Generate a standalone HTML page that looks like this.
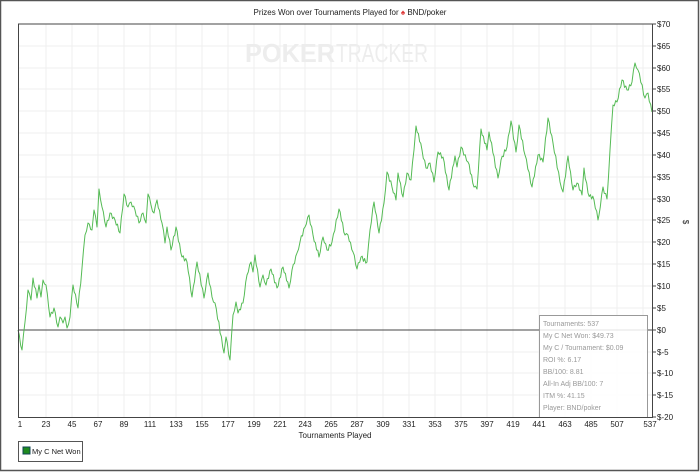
<!DOCTYPE html>
<html><head><meta charset="utf-8"><style>
html,body{margin:0;padding:0;background:#fff;}
svg{display:block;font-family:"Liberation Sans",Arial,sans-serif;}
</style></head><body>
<svg width="700" height="472" viewBox="0 0 700 472" xmlns="http://www.w3.org/2000/svg">
<rect x="0.5" y="0.5" width="698" height="470" fill="#fff" stroke="#555" stroke-width="1.5"/>
<text x="350" y="15" font-size="8" text-anchor="middle" fill="#222">Prizes Won over Tournaments Played for <tspan fill="#d33">♠</tspan> BND/poker</text>
<g stroke="#efefef" stroke-width="1">
<line x1="46" y1="24" x2="46" y2="417"/><line x1="72" y1="24" x2="72" y2="417"/><line x1="98" y1="24" x2="98" y2="417"/><line x1="124" y1="24" x2="124" y2="417"/><line x1="150" y1="24" x2="150" y2="417"/><line x1="176" y1="24" x2="176" y2="417"/><line x1="202" y1="24" x2="202" y2="417"/><line x1="228" y1="24" x2="228" y2="417"/><line x1="254" y1="24" x2="254" y2="417"/><line x1="280" y1="24" x2="280" y2="417"/><line x1="305" y1="24" x2="305" y2="417"/><line x1="331" y1="24" x2="331" y2="417"/><line x1="357" y1="24" x2="357" y2="417"/><line x1="383" y1="24" x2="383" y2="417"/><line x1="409" y1="24" x2="409" y2="417"/><line x1="435" y1="24" x2="435" y2="417"/><line x1="461" y1="24" x2="461" y2="417"/><line x1="487" y1="24" x2="487" y2="417"/><line x1="513" y1="24" x2="513" y2="417"/><line x1="539" y1="24" x2="539" y2="417"/><line x1="565" y1="24" x2="565" y2="417"/><line x1="591" y1="24" x2="591" y2="417"/><line x1="617" y1="24" x2="617" y2="417"/><line x1="643" y1="24" x2="643" y2="417"/>
<line x1="18" y1="46" x2="652" y2="46"/><line x1="18" y1="68" x2="652" y2="68"/><line x1="18" y1="89" x2="652" y2="89"/><line x1="18" y1="111" x2="652" y2="111"/><line x1="18" y1="133" x2="652" y2="133"/><line x1="18" y1="155" x2="652" y2="155"/><line x1="18" y1="177" x2="652" y2="177"/><line x1="18" y1="199" x2="652" y2="199"/><line x1="18" y1="220" x2="652" y2="220"/><line x1="18" y1="242" x2="652" y2="242"/><line x1="18" y1="264" x2="652" y2="264"/><line x1="18" y1="286" x2="652" y2="286"/><line x1="18" y1="308" x2="652" y2="308"/><line x1="18" y1="352" x2="652" y2="352"/><line x1="18" y1="373" x2="652" y2="373"/><line x1="18" y1="395" x2="652" y2="395"/>
</g>
<text x="245" y="62" font-size="26" font-weight="bold" fill="#ededed" textLength="90" lengthAdjust="spacingAndGlyphs">POKER</text>
<text x="336" y="62" font-size="26" fill="#ededed" textLength="92" lengthAdjust="spacingAndGlyphs">TRACKER</text>
<line x1="18" y1="330" x2="652" y2="330" stroke="#444" stroke-width="1"/>
<polyline id="ln" fill="none" stroke="#55bb55" stroke-width="1" stroke-linejoin="round" points="18,330 22,350 25,322 28,290 31,300 33,278 37,298 39,285 41,297 43,280 46,285 50,317 54,308 58,327 60,317 63,323 65,317 67,328 70,317 73,285 78,308 82,268 85,235 88,223 92,230 94,210 97,227 99,189 102,207 106,227 110,213 115,220 120,233 124,194 128,207 131,202 135,210 139,223 143,213 146,223 148,194 151,205 154,213 157,200 162,223 165,243 167,227 171,250 176,227 182,257 187,262 192,297 197,262 204,298 208,273 212,297 215,303 224,353 226,337 230,360 233,315 236,302 238,313 243,303 247,275 251,262 253,272 255,255 260,287 263,275 266,285 271,269 277,288 283,267 289,288 292,270 297,253 300,242 305,227 309,215 313,235 319,257 323,237 327,250 332,242 339,209 345,235 348,235 353,252 357,269 361,257 367,262 370,230 374,202 379,233 384,203 387,172 392,187 396,200 398,173 403,197 407,173 411,180 414,150 416,126 422,150 426,168 430,163 434,182 438,152 443,157 449,190 455,156 457,167 461,147 468,162 474,187 477,189 481,129 487,150 489,132 498,178 501,160 507,147 511,121 516,152 519,125 525,155 532,187 538,155 543,162 548,118 553,143 560,182 563,192 568,156 573,190 577,183 582,195 584,168 588,193 594,200 598,220 599,215 603,187 607,199 610,150 613,105 617,102 622,80 627,90 632,82 635,63 638,70 645,98 648,93 652,112"/>
<rect x="539.5" y="315.5" width="108" height="102" fill="#fff" fill-opacity="0.85" stroke="#999"/>
<g font-size="7" fill="#999">
<text x="543" y="326">Tournaments: 537</text>
<text x="543" y="338">My C Net Won: $49.73</text>
<text x="543" y="350">My C / Tournament: $0.09</text>
<text x="543" y="362">ROI %: 6.17</text>
<text x="543" y="374">BB/100: 8.81</text>
<text x="543" y="386">All-In Adj BB/100: 7</text>
<text x="543" y="398">ITM %: 41.15</text>
<text x="543" y="410">Player: BND/poker</text>
</g>
<polyline fill="none" stroke="#444" stroke-width="1" points="18.5,24 18.5,417.5 652.5,417.5 652.5,24 18,24"/>
<g stroke="#444"><line x1="652" y1="24" x2="656" y2="24"/><line x1="652" y1="46" x2="656" y2="46"/><line x1="652" y1="68" x2="656" y2="68"/><line x1="652" y1="89" x2="656" y2="89"/><line x1="652" y1="111" x2="656" y2="111"/><line x1="652" y1="133" x2="656" y2="133"/><line x1="652" y1="155" x2="656" y2="155"/><line x1="652" y1="177" x2="656" y2="177"/><line x1="652" y1="199" x2="656" y2="199"/><line x1="652" y1="220" x2="656" y2="220"/><line x1="652" y1="242" x2="656" y2="242"/><line x1="652" y1="264" x2="656" y2="264"/><line x1="652" y1="286" x2="656" y2="286"/><line x1="652" y1="308" x2="656" y2="308"/><line x1="652" y1="330" x2="656" y2="330"/><line x1="652" y1="352" x2="656" y2="352"/><line x1="652" y1="373" x2="656" y2="373"/><line x1="652" y1="395" x2="656" y2="395"/><line x1="652" y1="417" x2="656" y2="417"/></g>
<g font-size="8" fill="#222">
<text x="657" y="27">$70</text><text x="657" y="49">$65</text><text x="657" y="71">$60</text><text x="657" y="92">$55</text><text x="657" y="114">$50</text><text x="657" y="136">$45</text><text x="657" y="158">$40</text><text x="657" y="180">$35</text><text x="657" y="202">$30</text><text x="657" y="223">$25</text><text x="657" y="245">$20</text><text x="657" y="267">$15</text><text x="657" y="289">$10</text><text x="657" y="311">$5</text><text x="657" y="333">$0</text><text x="657" y="355">$-5</text><text x="657" y="376">$-10</text><text x="657" y="398">$-15</text><text x="657" y="420">$-20</text>
<text x="683" y="222" transform="rotate(90 683 222)" text-anchor="middle">$</text>
</g>
<g font-size="8" fill="#222" text-anchor="middle">
<text x="20" y="427">1</text><text x="46" y="427">23</text><text x="72" y="427">45</text><text x="98" y="427">67</text><text x="124" y="427">89</text><text x="150" y="427">111</text><text x="176" y="427">133</text><text x="202" y="427">155</text><text x="228" y="427">177</text><text x="254" y="427">199</text><text x="280" y="427">221</text><text x="305" y="427">243</text><text x="331" y="427">265</text><text x="357" y="427">287</text><text x="383" y="427">309</text><text x="409" y="427">331</text><text x="435" y="427">353</text><text x="461" y="427">375</text><text x="487" y="427">397</text><text x="513" y="427">419</text><text x="539" y="427">441</text><text x="565" y="427">463</text><text x="591" y="427">485</text><text x="617" y="427">507</text><text x="650" y="427">537</text>
<text x="335" y="438">Tournaments Played</text>
</g>
<rect x="18.5" y="441.5" width="64" height="20" fill="#fff" stroke="#555"/>
<rect x="23" y="447" width="7" height="7" fill="#1f8a1f" stroke="#145"/>
<text x="32" y="454" font-size="7.5" fill="#222">My C Net Won</text>
</svg>
<script>
(function(){
var el=document.getElementById('ln');
var p=el.getAttribute('points').trim().split(/\s+/).map(function(s){return s.split(',').map(Number);});
var out=[],k=0;
for(var i=0;i<p.length-1;i++){
 var a=p[i],b=p[i+1];out.push(a);
 var dx=b[0]-a[0],n=Math.max(0,Math.floor(dx/1.2)-1);
 for(var j=1;j<=n;j++){var t=j/(n+1);k++;
  var off=((k%2)?-1:1)*(1.2+((k*7)%5)*0.3);
  out.push([a[0]+dx*t,a[1]+(b[1]-a[1])*t+off]);}
}
out.push(p[p.length-1]);
el.setAttribute('points',out.map(function(q){return q[0].toFixed(1)+','+q[1].toFixed(1);}).join(' '));
})();
</script>
</body></html>
